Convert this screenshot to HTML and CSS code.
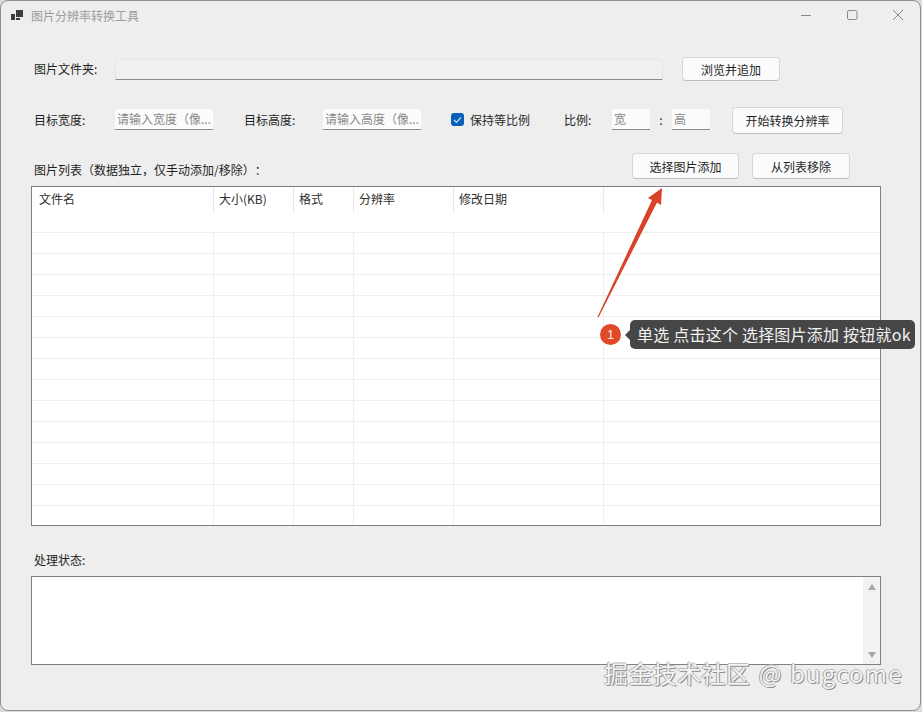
FILE: index.html
```html
<!DOCTYPE html>
<html lang="zh-CN">
<head>
<meta charset="utf-8">
<title>图片分辨率转换工具</title>
<link rel="stylesheet" href="styles.css">
</head>
<body>
<div class="window">
  <header class="titlebar">
    <svg class="app-icon" width="13" height="11" viewBox="0 0 13 11"><path fill="#3c3c3c" d="M0 4h4v6H0zM5 0h7v7H5zM5 8h4v2H5z"/></svg>
    <span class="app-title">图片分辨率转换工具</span>
    <div class="controls">
      <svg width="12" height="12" viewBox="0 0 12 12"><path stroke="#8a8a8a" d="M1 6.5h10"/></svg>
      <svg width="12" height="12" viewBox="0 0 12 12"><rect x="1.5" y="1.5" width="9.5" height="9" rx="1.5" fill="none" stroke="#8a8a8a"/></svg>
      <svg width="12" height="12" viewBox="0 0 12 12"><path stroke="#8a8a8a" d="M1 1l10 10M11 1L1 11"/></svg>
    </div>
  </header>

  <main class="content">
    <div class="row row-folder">
      <label class="lbl lbl-folder">图片文件夹:</label>
      <div class="field field-folder"></div>
      <button class="btn btn-browse">浏览并追加</button>
    </div>

    <div class="row row-target">
      <label class="lbl lbl-width">目标宽度:</label>
      <div class="field field-size">请输入宽度（像...</div>
      <label class="lbl lbl-height">目标高度:</label>
      <div class="field field-size">请输入高度（像...</div>
      <span class="check"><svg width="9" height="8" viewBox="0 0 9 8"><path d="M1 4l2.4 2.4L8 1.4" fill="none" stroke="#cfe3f7" stroke-width="1.2"/></svg></span>
      <span class="lbl lbl-check">保持等比例</span>
      <label class="lbl lbl-ratio">比例:</label>
      <div class="field field-ratio">宽</div>
      <span class="lbl lbl-colon">:</span>
      <div class="field field-ratio">高</div>
      <button class="btn btn-start">开始转换分辨率</button>
    </div>

    <div class="row row-list">
      <label class="lbl lbl-list">图片列表（数据独立，仅手动添加/移除）：</label>
      <button class="btn btn-add">选择图片添加</button>
      <button class="btn btn-remove">从列表移除</button>
    </div>

    <div class="table-box">
      <table class="grid">
        <colgroup>
          <col class="c1"><col class="c2"><col class="c3"><col class="c4"><col class="c5"><col>
        </colgroup>
        <thead>
          <tr><th>文件名</th><th>大小(KB)</th><th>格式</th><th>分辨率</th><th>修改日期</th><th></th></tr>
        </thead>
        <tbody>
          <tr><td></td><td></td><td></td><td></td><td></td><td></td></tr>
          <tr><td></td><td></td><td></td><td></td><td></td><td></td></tr>
          <tr><td></td><td></td><td></td><td></td><td></td><td></td></tr>
          <tr><td></td><td></td><td></td><td></td><td></td><td></td></tr>
          <tr><td></td><td></td><td></td><td></td><td></td><td></td></tr>
          <tr><td></td><td></td><td></td><td></td><td></td><td></td></tr>
          <tr><td></td><td></td><td></td><td></td><td></td><td></td></tr>
          <tr><td></td><td></td><td></td><td></td><td></td><td></td></tr>
          <tr><td></td><td></td><td></td><td></td><td></td><td></td></tr>
          <tr><td></td><td></td><td></td><td></td><td></td><td></td></tr>
          <tr><td></td><td></td><td></td><td></td><td></td><td></td></tr>
          <tr><td></td><td></td><td></td><td></td><td></td><td></td></tr>
          <tr><td></td><td></td><td></td><td></td><td></td><td></td></tr>
          <tr class="last"><td></td><td></td><td></td><td></td><td></td><td></td></tr>
        </tbody>
      </table>
    </div>

    <label class="lbl lbl-status">处理状态:</label>
    <div class="status-box">
      <div class="scrollbar">
        <svg width="10" height="8" viewBox="0 0 10 8"><path fill="#a8a8a8" d="M5 1l4 6H1z"/></svg>
        <svg width="10" height="8" viewBox="0 0 10 8"><path fill="#a8a8a8" d="M1 1h8L5 7z"/></svg>
      </div>
    </div>
  </main>

  <svg class="arrow" width="70" height="134" viewBox="0 0 70 134">
    <path fill="#d8432a" d="M1.5 132L56 15l-4-2L66 3l-1 17-4-2.5L2.5 132.5z"/>
  </svg>
  <div class="note">
    <span class="badge">1</span>
    <div class="bubble">单选 点击这个 选择图片添加 按钮就ok</div>
  </div>
  <div class="watermark">掘金技术社区 @ <span class="wm-latin">bugcome</span></div>
</div>
</body>
</html>
```

FILE: styles.css
```css
* { box-sizing: border-box; }
html, body { margin: 0; padding: 0; }
body {
  width: 922px;
  height: 712px;
  overflow: hidden;
  background: #dcdcdc;
  font-family: "Noto Sans CJK SC", "Liberation Sans", sans-serif;
  font-size: 12px;
  color: #1f1f1f;
  text-spacing-trim: space-all;
}
.window {
  position: relative;
  width: 921px;
  height: 711px;
  background: #eeeeee;
  border: 1px solid #8f8f8f;
  border-radius: 8px;
  overflow: hidden;
}

/* title bar */
.titlebar {
  display: flex;
  align-items: center;
  height: 28px;
  padding-left: 10px;
}
.app-title { margin-left: 7px; color: #9c9c9c; font-size: 12px; }
.controls {
  margin-left: auto;
  display: flex;
  gap: 34px;
  padding-right: 16px;
}

/* content */
.content { padding: 28px 39px 0 30px; }
.row { display: flex; align-items: center; }
.lbl { white-space: nowrap; line-height: 16px; }
.lbl-folder, .lbl-width, .lbl-list, .lbl-status { margin-left: 3px; }

.field {
  height: 21px;
  background: #f6f6f6;
  border-bottom: 1px solid #8a8a8a;
  border-radius: 2px 2px 0 0;
  color: #8a8a8a;
  line-height: 20px;
  padding-left: 2px;
  white-space: nowrap;
  overflow: hidden;
}
.field-size { width: 98px; background: #fbfbfb; }
.field-ratio { width: 38px; background: #fbfbfb; }

.btn {
  background: #fbfbfb;
  border: 1px solid #d6d6d6;
  border-bottom-color: #bdbdbd;
  border-radius: 4px;
  font: inherit;
  color: #1f1f1f;
  padding: 0;
  cursor: default;
}

/* row 1 */
.row-folder { height: 24px; }
.lbl-folder { width: 81px; }
.field-folder {
  width: 548px;
  background: #f0f0f0;
  border-top: 1px solid #e6e6e6;
  border-left: 1px solid #e6e6e6;
  border-right: 1px solid #e6e6e6;
}
.btn-browse { width: 98px; height: 24px; margin-left: 19px; }

/* row 2 */
.row-target { height: 27px; margin-top: 26px; }
.row-target > :not(.btn) { margin-bottom: 2px; }
.lbl-width { width: 81px; }
.lbl-height { margin-left: 31px; width: 79px; }
.check {
  display: flex;
  align-items: center;
  justify-content: center;
  width: 13px;
  height: 13px;
  margin-left: 30px;
  background: #0a5fb8;
  border-radius: 3px;
}
.lbl-check { margin-left: 6px; color: #2a2a2a; }
.lbl-ratio { margin-left: 34px; width: 48px; }
.lbl-colon { width: 22px; text-align: center; }
.btn-start { width: 111px; height: 27px; margin-left: 22px; }

/* row 3 */
.row-list { height: 26px; margin-top: 19px; }
.lbl-list { width: 598px; margin-top: 8px; }
.btn-add { width: 107px; height: 26px; }
.btn-remove { width: 98px; height: 26px; margin-left: 13px; }

/* list table */
.table-box {
  width: 850px;
  height: 340px;
  margin-top: 7px;
  background: #ffffff;
  border: 1px solid #808080;
  overflow: hidden;
}
.grid {
  width: 848px;
  table-layout: fixed;
  border-collapse: separate;
  border-spacing: 0;
}
.c1 { width: 182px; }
.c2 { width: 80px; }
.c3 { width: 60px; }
.c4 { width: 100px; }
.c5 { width: 150px; }
.grid th {
  height: 46px;
  padding: 3px 0 0 5px;
  vertical-align: top;
  text-align: left;
  font-weight: 400;
  line-height: 17px;
  color: #2e2e2e;
  border-bottom: 1px solid #eeeeee;
  background: linear-gradient(#e9e9e9, #e9e9e9) right top / 1px 26px no-repeat;
}
.grid th:first-child { padding-left: 7px; }
.grid td {
  height: 21px;
  padding: 0;
  border-right: 1px solid #eeeeee;
  border-bottom: 1px solid #eeeeee;
}
.grid th:last-child { background: none; }
.grid td:last-child { border-right: 0; }
.grid .last td { height: 19px; border-bottom: 0; }

/* status */
.lbl-status { display: block; margin-top: 26px; }
.status-box {
  display: flex;
  justify-content: flex-end;
  width: 850px;
  height: 89px;
  margin-top: 8px;
  background: #ffffff;
  border: 1px solid #808080;
}
.scrollbar {
  display: flex;
  flex-direction: column;
  justify-content: space-between;
  align-items: center;
  width: 17px;
  padding: 6px 0 5px;
  background: #f2f2f2;
}

/* annotation overlays */
.arrow { position: absolute; left: 595px; top: 184px; }
.note {
  position: absolute;
  left: 599px;
  top: 319px;
  display: flex;
  align-items: center;
  gap: 9px;
}
.badge {
  width: 21px;
  height: 21px;
  border-radius: 50%;
  background: #e0482a;
  color: #fbe9e4;
  text-align: center;
  line-height: 21px;
  font-family: "Liberation Sans", sans-serif;
  font-size: 13px;
}
.bubble {
  position: relative;
  height: 29px;
  padding: 0 4px 0 7px;
  background: #464646;
  border-radius: 5px;
  color: #f2f2f2;
  font-size: 16px;
  letter-spacing: 0.22px;
  line-height: 29px;
  white-space: nowrap;
}
.bubble::before {
  content: "";
  position: absolute;
  left: -5px;
  top: 10px;
  border-style: solid;
  border-width: 5px 5px 5px 0;
  border-color: transparent #464646 transparent transparent;
}
.watermark {
  position: absolute;
  left: 603px;
  top: 654px;
  font-size: 24px;
  line-height: 36px;
  letter-spacing: 0.4px;
  word-spacing: 2.5px;
  white-space: nowrap;
  color: #f3f3f3;
  text-shadow: 1px 1px 0 #8f8f8f, -1px 0 0 #a5a5a5, 0 -1px 0 #bdbdbd;
}
.wm-latin { letter-spacing: 1.2px; }
```
